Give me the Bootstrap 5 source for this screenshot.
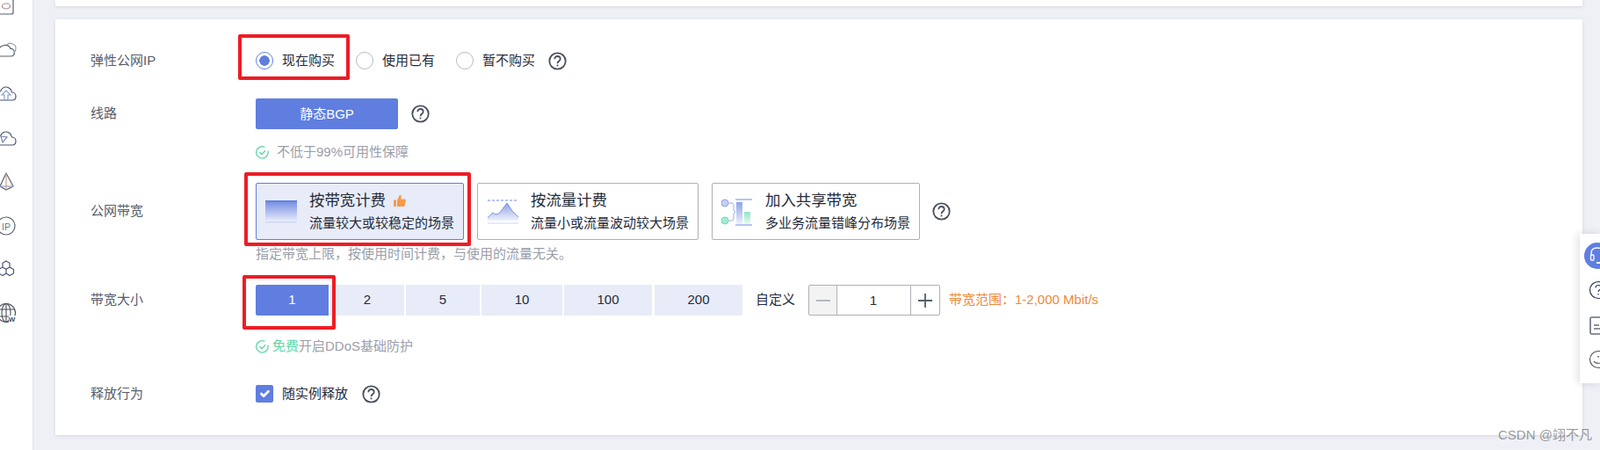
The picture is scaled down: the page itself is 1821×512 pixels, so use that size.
<!DOCTYPE html>
<html lang="zh-CN">
<head>
<meta charset="utf-8">
<title>弹性公网IP</title>
<link href="https://cdn.jsdelivr.net/npm/bootstrap@5.3.0/dist/css/bootstrap.min.css" rel="stylesheet">
<style>
:root{--hw-blue:#5f7ee0;--hw-pale:#e8ecf8;--hw-ink:#252b3a;--hw-label:#575d6c;--hw-mute:#9a9ea8;--hw-line:#adb0b8;--hw-orange:#ee8a3a;--hw-green:#5cd6a6;--hw-red:#ee1c25;--hw-bg:#eef0f5}
html,body{height:512px;overflow:hidden}
body{background:var(--hw-bg);font-family:"Liberation Sans","Noto Sans CJK SC",sans-serif;font-size:15px;color:var(--hw-ink);width:1821px;position:relative}
.shell{height:512px}
.rail{width:38px;flex:none;background:#fff;border-right:1px solid #e2e4ea;overflow:hidden;gap:20px;height:512px}
.rail svg{flex:none;display:block;margin-top:0}
.rail svg:first-child{margin-top:-8px}
.stage{flex:1;padding:0 20px 0 25px;min-width:0}
.stub{height:7px;background:#fff;box-shadow:0 1px 4px rgba(40,50,80,.12);border:0;border-radius:0}
.sheet{position:relative;height:473px;margin-top:15px;background:#fff;border:0;border-radius:0;box-shadow:0 1px 4px rgba(40,50,80,.12);padding:29px 0 0 40px}
.fline{display:flex}
.flabel{width:188px;flex:none;color:var(--hw-label);display:flex;align-items:center}
.fbody{flex:1;min-width:0}
.h36{height:36px}.h35{height:35px}.h65{height:65px}.h20{height:20px}
.mt25{margin-top:25px}.mt34{margin-top:34px}
.opt{display:flex;align-items:center;margin:0}
.opt .form-check-input{width:20px;height:20px;margin:0 10px 0 0;flex:none;float:none;border-color:#b7bac2}
.opt .form-check-input:focus{box-shadow:none}
.opt .form-check-input[type=radio]:checked{background-color:#fff;border-color:var(--hw-blue);background-image:radial-gradient(circle,var(--hw-blue) 0 5.5px,transparent 6px)}
.opt .form-check-input[type=checkbox]{border-radius:2px}
.opt .form-check-input[type=checkbox]:checked{background-color:var(--hw-blue);border-color:var(--hw-blue)}
.sp24{margin-right:24px}
.ask{flex:none;display:block}
.ask-a{margin-left:15px}
.ask-b{margin-left:15px}
.solid-btn{width:162px;height:35px;background:var(--hw-blue);border:0;border-radius:2px;color:#fff;font-size:15px;padding:0;line-height:35px}
.note{height:20px;margin-top:16px;color:var(--hw-mute);display:flex;align-items:center;white-space:nowrap}
.note svg{flex:none;margin-right:9px}
.note.tight{margin-top:6px}
.note.far{margin-top:25px}
.note.far svg{margin-right:4px}
.free{color:var(--hw-green)}
.plan{height:65px;border:1px solid var(--hw-line);border-radius:2px;background:#fff;display:flex;align-items:center;padding:0;white-space:nowrap;flex:none}
.plan>svg{flex:none;display:block}
.plan.on{background:var(--hw-pale);border-color:var(--hw-blue)}
.p1{width:237px;margin-right:15px}.p1>svg{margin:0 14px 0 10px}
.p2{width:252px;margin-right:15px}.p2>svg{margin:0 14px 0 11px}
.p3{width:237px;margin-right:14px}.p3>svg{margin:0 15px 0 10px}
.plan-t{font-size:17.4px;line-height:22px;margin-bottom:5px;display:flex;align-items:center;gap:9px}
.plan-s{font-size:15px;line-height:20px}
.size{height:35px;background:var(--hw-pale);border:0;border-radius:0;color:var(--hw-ink);font-size:15px;padding:0;flex:none}
.size.on{background:var(--hw-blue);color:#fff;border-radius:2px 0 0 2px}
.size.last{border-radius:0 2px 2px 0;margin-left:1px}
.w83{width:83px}.w84{width:84px}.w92{width:92px}.w100{width:100px}
.sizes{gap:2px}
.custom{margin:0 15px;white-space:nowrap}
.stepper{width:150px;height:35px;flex-wrap:nowrap;flex:none;margin-right:10px}
.stepper .btn{width:33px;padding:0;border:1px solid var(--hw-line);border-radius:2px 0 0 2px;background:#f3f3f4;display:flex;align-items:center;justify-content:center}
.stepper .btn:last-child{width:34px;border-radius:0 2px 2px 0;background:#fff;margin-left:-1px}
.stepper .form-control{height:35px;padding:0;text-align:center;font-size:15px;color:var(--hw-ink);border:1px solid var(--hw-line);border-width:1px 1px 1px 0;border-radius:0;min-width:0;font-family:inherit}
.range{color:var(--hw-orange);white-space:nowrap}
.mark-box{position:absolute;border:4px solid var(--hw-red);border-radius:2px;pointer-events:none}
.mb1{left:208px;top:17px;width:127px;height:52px}
.mb2{left:215px;top:174px;width:258px;height:84px}
.mb3{left:213px;top:291px;width:106px;height:62px}
.float-tools{position:absolute;left:1798px;top:266px;width:23px;height:170px;background:#fff;box-shadow:-2px 0 10px rgba(40,50,80,.16);overflow:hidden;padding:10px 0 0 5px;gap:0}
.float-tools svg{flex:none;display:block}
.ft-a{margin:13px 0 0 5px}
.ft-b{margin:19px 0 0 6px}
.ft-c{margin:16px 0 0 5px}
.wm{position:absolute;left:1705px;top:486px;font-size:15px;line-height:18px;color:rgba(90,90,90,.62);white-space:nowrap}
</style>
</head>
<body>
<div class="shell d-flex">
  <aside class="rail d-flex flex-column">
    <svg width="30" height="30" viewBox="0 0 30 30" fill="none" stroke="#5a6070" stroke-width="1.2"><path d="M-2 2H13a2 2 0 0 1 2 2V22a2 2 0 0 1-2 2H-2"/><ellipse cx="7" cy="15" rx="4.5" ry="3" stroke="#a88"/></svg>
    <svg width="30" height="30" viewBox="0 0 30 30" fill="none" stroke="#5a6070" stroke-width="1.2"><path d="M0 22H12c3 0 4.500-2 4.500-4.500S14 13 12 13.500C11 10.500 8 9 5 9.500 2 10-.5 12-1 14"/><path d="M8 9c2-2.500 5-2 7-.500 2.500.3 3.500 3 2.800 6-.4 1.800-1 3-2.300 4" stroke="#9a9ea8"/></svg>
    <svg width="30" height="30" viewBox="0 0 30 30" fill="none" stroke="#4a5270" stroke-width="1.2"><path d="M-1 22H14c2.500 0 4-2 4-4.500S16 13 13.500 13C13 9.500 10 7 7 7 4 7 1.500 9 .5 12.500"/><path d="M7 11l-5 5h3v6h4v-6h3z" stroke="#8ea0c8"/></svg>
    <svg width="30" height="30" viewBox="0 0 30 30" fill="none" stroke="#4a5270" stroke-width="1.2"><path d="M-1 23H14c2.500 0 4-2 4-4.500S16 14 13.500 14C13 10.500 10 8 7 8 4 8 1.500 10 .5 13"/><path d="M1 13l7 1-5 6z" stroke="#7a86a8"/></svg>
    <svg width="30" height="30" viewBox="0 0 30 30" fill="none" stroke="#5a6070" stroke-width="1.200"><path d="M7 5L0 20l7 4 8-4z"/><path d="M7 5v19" stroke="#c9a27c"/><path d="M0 20h15" stroke="#9aa2c0"/></svg>
    <svg width="30" height="30" viewBox="0 0 30 30" fill="none" stroke="#5a6070" stroke-width="1.200"><circle cx="7" cy="15" r="10"/><text x="7" y="19.500" font-family="Liberation Sans" font-size="10.500" text-anchor="middle" fill="#6a7590" stroke="none">IP</text></svg>
    <svg width="30" height="30" viewBox="0 0 30 30" fill="none" stroke="#4a5270" stroke-width="1.200"><path d="M7 5l4 2.300v4.600L7 14.200l-4-2.300V7.300z"/><path d="M11 12l4.500 2.500v4.500L11 21.500 7 19v-4.800"/><path d="M3 12l-4.500 2.500v4.500L3 21.500 7 19"/></svg>
    <svg width="30" height="30" viewBox="0 0 30 30" fill="none" stroke="#4a4f5c" stroke-width="1.100"><circle cx="7" cy="14" r="10.500"/><ellipse cx="7" cy="14" rx="5" ry="10.500"/><path d="M7 3.500v21M-3 10h20M-3 18h20"/><rect x="10" y="17" width="8" height="8" fill="#fff" stroke="none"/><text x="13.500" y="24" font-family="Liberation Sans" font-size="8" font-weight="700" text-anchor="middle" fill="#4a4f5c" stroke="none">W</text></svg>
  </aside>
  <main class="stage">
    <div class="card stub"></div>
    <section class="card sheet d-block">
      <div class="fline h36">
        <div class="flabel">弹性公网IP</div>
        <div class="fbody d-flex align-items-center">
          <label class="opt sp24 form-check-label"><input class="form-check-input" type="radio" name="eip" checked>现在购买</label>
          <label class="opt sp24 form-check-label"><input class="form-check-input" type="radio" name="eip">使用已有</label>
          <label class="opt form-check-label"><input class="form-check-input" type="radio" name="eip">暂不购买</label>
          <svg class="ask ask-a" width="21" height="21" viewBox="0 0 21 21" fill="none" stroke="#4a4f5c" stroke-width="1.800"><circle cx="10.500" cy="10.500" r="9.200"/><path d="M7.300 8.200c0-1.900 1.400-3.200 3.200-3.200s3.200 1.300 3.200 3c0 2.600-3.200 2.500-3.200 5.200"/><path d="M10.500 14.600v1.800"/></svg>
        </div>
      </div>
      <div class="fline mt25">
        <div class="flabel h35">线路</div>
        <div class="fbody">
          <div class="d-flex align-items-center h35">
            <button class="btn solid-btn" type="button">静态BGP</button>
            <svg class="ask ask-b" width="21" height="21" viewBox="0 0 21 21" fill="none" stroke="#4a4f5c" stroke-width="1.800"><circle cx="10.500" cy="10.500" r="9.200"/><path d="M7.300 8.200c0-1.900 1.400-3.200 3.200-3.200s3.200 1.300 3.200 3c0 2.600-3.200 2.500-3.200 5.200"/><path d="M10.500 14.600v1.800"/></svg>
          </div>
          <div class="note"><svg width="15" height="15" viewBox="0 0 15 15" fill="none" stroke="#5cd6a6" stroke-width="1.300"><path d="M13.800 5.500A6.700 6.700 0 1 1 10.500 1.500"/><path d="M4.500 7l2.500 2.700 4-4.500"/></svg>不低于99%可用性保障</div>
        </div>
      </div>
      <div class="fline mt25">
        <div class="flabel h65">公网带宽</div>
        <div class="fbody">
          <div class="d-flex align-items-center h65">
            <div class="plan on p1">
              <svg width="36" height="26" viewBox="0 0 36 26"><defs><linearGradient id="gb" x1="0" y1="0" x2="0" y2="1"><stop offset="0" stop-color="#6f88e2"/><stop offset="1" stop-color="#e4e9f9"/></linearGradient></defs><rect width="36" height="23" fill="url(#gb)"/><rect y="0" width="36" height="1.500" fill="#5f7ee0"/><rect y="24" width="36" height="1.500" fill="#cdd6f5"/></svg>
              <div><div class="plan-t">按带宽计费<svg width="14" height="15" viewBox="0 0 14 15"><path fill="#f69a4b" d="M0 6.500h3V14H0zM4 6.500L7 .8c1.500 0 2 1.200 1.700 2.500L8.300 5.500h4c1.200 0 1.700.9 1.500 1.900l-1.200 5.500c-.2.800-.8 1.100-1.500 1.100H4z"/></svg></div><div class="plan-s">流量较大或较稳定的场景</div></div>
            </div>
            <div class="plan p2">
              <svg width="35" height="28" viewBox="0 0 35 28"><defs><linearGradient id="gm" x1="0" y1="0" x2="0" y2="1"><stop offset="0" stop-color="#8ea2ea"/><stop offset="1" stop-color="#eef1fb"/></linearGradient></defs><path d="M0 1h35" stroke="#6f88e2" stroke-width="1" stroke-dasharray="3 2"/><path d="M0 21l6-6 3 2 4-1 9-12 6 9 7 7v4H0z" fill="url(#gm)"/><path d="M0 21l6-6 3 2 4-1 9-12 6 9 7 7" fill="none" stroke="#7d93e4" stroke-width="1"/><path d="M0 27h35" stroke="#cdd6f5" stroke-width="1.200"/></svg>
              <div><div class="plan-t">按流量计费</div><div class="plan-s">流量小或流量波动较大场景</div></div>
            </div>
            <div class="plan p3">
              <svg width="35" height="32" viewBox="0 0 35 32"><defs><linearGradient id="gv" x1="0" y1="0" x2="0" y2="1"><stop offset="0" stop-color="#8ea2ea"/><stop offset="1" stop-color="#eef1fb"/></linearGradient><linearGradient id="gg" x1="0" y1="0" x2="0" y2="1"><stop offset="0" stop-color="#8fe6c6"/><stop offset="1" stop-color="#eafaf4"/></linearGradient></defs><circle cx="4" cy="6" r="4" fill="#c5cff3" stroke="#8ea2ea"/><circle cx="4" cy="26" r="4" fill="#a4ebd0" stroke="#6fdcb4"/><path d="M8 6h4c2 0 2 2 2 4v3c0 2 1 3 2 3-1 0-2 1-2 3v3c0 2 0 4-2 4H8" fill="none" stroke="#8ea2ea" stroke-width=".9"/><path d="M16 2h19M16 31h19" stroke="#6f88e2" stroke-width="1"/><rect x="17" y="5" width="7" height="25" fill="url(#gv)"/><rect x="26" y="16" width="7" height="14" fill="url(#gg)"/></svg>
              <div><div class="plan-t">加入共享带宽</div><div class="plan-s">多业务流量错峰分布场景</div></div>
            </div>
            <svg class="ask" width="21" height="21" viewBox="0 0 21 21" fill="none" stroke="#4a4f5c" stroke-width="1.800"><circle cx="10.500" cy="10.500" r="9.200"/><path d="M7.300 8.200c0-1.900 1.400-3.200 3.200-3.200s3.200 1.300 3.200 3c0 2.600-3.200 2.500-3.200 5.200"/><path d="M10.500 14.600v1.800"/></svg>
          </div>
          <div class="note tight">指定带宽上限，按使用时间计费，与使用的流量无关。</div>
        </div>
      </div>
      <div class="fline mt25">
        <div class="flabel h35">带宽大小</div>
        <div class="fbody">
          <div class="d-flex align-items-center h35">
            <div class="d-flex sizes">
              <button class="btn size on w83" type="button">1</button>
              <button class="btn size w84" type="button">2</button>
              <button class="btn size w84" type="button">5</button>
              <button class="btn size w92" type="button">10</button>
              <button class="btn size w100" type="button">100</button>
              <button class="btn size last w100" type="button">200</button>
            </div>
            <span class="custom">自定义</span>
            <div class="input-group stepper">
              <button class="btn" type="button" aria-label="减少"><svg width="16" height="16" viewBox="0 0 16 16"><path d="M0 8h16" stroke="#b4b7be" stroke-width="2"/></svg></button>
              <input class="form-control" type="text" value="1" aria-label="带宽">
              <button class="btn" type="button" aria-label="增加"><svg width="16" height="16" viewBox="0 0 16 16"><path d="M0 8h16M8 0v16" stroke="#575d6c" stroke-width="1.800"/></svg></button>
            </div>
            <span class="range">带宽范围：1-2,000 Mbit/s</span>
          </div>
          <div class="note far"><svg width="15" height="15" viewBox="0 0 15 15" fill="none" stroke="#5cd6a6" stroke-width="1.300"><path d="M13.800 5.500A6.700 6.700 0 1 1 10.500 1.500"/><path d="M4.500 7l2.500 2.700 4-4.500"/></svg><span class="free">免费</span>开启DDoS基础防护</div>
        </div>
      </div>
      <div class="fline mt34">
        <div class="flabel h20">释放行为</div>
        <div class="fbody d-flex align-items-center h20">
          <label class="opt form-check-label"><input class="form-check-input" type="checkbox" checked>随实例释放</label>
          <svg class="ask ms-3" width="21" height="21" viewBox="0 0 21 21" fill="none" stroke="#4a4f5c" stroke-width="1.800"><circle cx="10.500" cy="10.500" r="9.200"/><path d="M7.300 8.200c0-1.900 1.400-3.200 3.200-3.200s3.200 1.300 3.200 3c0 2.600-3.200 2.500-3.200 5.200"/><path d="M10.500 14.600v1.800"/></svg>
        </div>
      </div>
      <div class="mark-box mb1"></div>
      <div class="mark-box mb2"></div>
      <div class="mark-box mb3"></div>
    </section>
  </main>
</div>
<div class="float-tools d-flex flex-column">
  <svg width="30" height="30" viewBox="0 0 30 30" fill="none"><circle cx="15" cy="15" r="15" fill="#5f7ee0"/><path d="M8 15v-3c0-4 3-6 7-6s7 2 7 6v3" stroke="#fff" stroke-width="1.300"/><rect x="7.500" y="14" width="3.500" height="6" rx="1" stroke="#fff" stroke-width="1.300"/><path d="M14 23h6" stroke="#fff" stroke-width="2"/></svg>
  <svg class="ft-a" width="30" height="22" viewBox="0 0 30 22" fill="none" stroke="#2f3a5a" stroke-width="1.200"><circle cx="11" cy="11" r="9.500"/><path d="M8 8.500C8 6.500 9.500 5.500 11 5.500s3 1 3 2.800c0 2.500-3 2.500-3 5"/><path d="M11 15v1.500"/></svg>
  <svg class="ft-b" width="30" height="22" viewBox="0 0 30 22" fill="none" stroke="#6a6e7c" stroke-width="1.600"><rect x="1" y="1" width="22" height="19" rx="1.500"/><path d="M5 10h6M5 14h10M14 7h4" stroke-width="1.400"/></svg>
  <svg class="ft-c" width="30" height="22" viewBox="0 0 30 22" fill="none" stroke="#4a4f5c" stroke-width="1.100"><circle cx="11" cy="11" r="9.500"/><path d="M6 13c1.500 3 8 3 10 0"/><path d="M11 7v1.500" stroke-width="1.600"/></svg>
</div>
<div class="wm">CSDN @翊不凡</div>
<script src="https://cdn.jsdelivr.net/npm/bootstrap@5.3.0/dist/js/bootstrap.bundle.min.js"></script>
</body>
</html>
